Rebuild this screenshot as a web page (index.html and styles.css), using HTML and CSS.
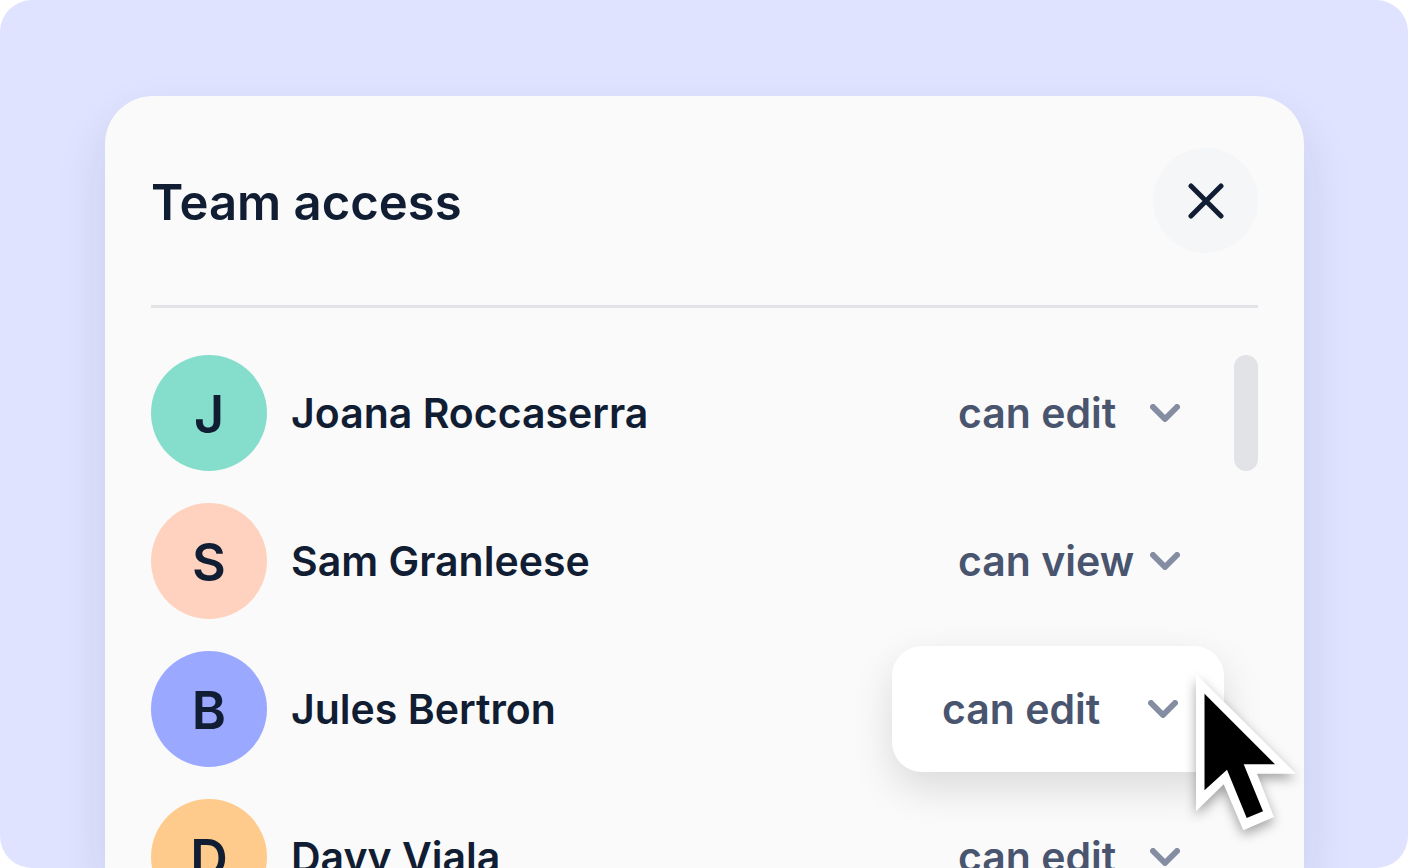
FILE: index.html
```html
<!DOCTYPE html>
<html lang="en">
<head>
<meta charset="utf-8">
<meta name="viewport" content="width=device-width, initial-scale=1">
<title>Team access</title>
<link rel="stylesheet" href="styles.css">
</head>
<body>
<svg class="symbols">
  <symbol id="chevron" viewBox="0 0 30 18"><path d="M3 3 15 15 27 3"/></symbol>
</svg>
<main class="stage">
  <section class="panel" aria-labelledby="panel-title">
    <header class="panel-header">
      <h1 class="panel-title" id="panel-title">Team access</h1>
      <button class="close" type="button" aria-label="Close">
        <svg class="close-icon" viewBox="0 0 36 36"><path d="M3 3 33 33M33 3 3 33"/></svg>
      </button>
    </header>
    <div class="panel-body">
      <ul class="members">
        <li class="member">
          <span class="avatar avatar-mint">J</span>
          <label class="name" for="role-joana">Joana Roccaserra</label>
          <div class="role">
            <select class="role-select" id="role-joana"><option selected>can edit</option><option>can view</option></select>
            <svg class="chevron"><use href="#chevron"/></svg>
          </div>
        </li>
        <li class="member">
          <span class="avatar avatar-peach">S</span>
          <label class="name" for="role-sam">Sam Granleese</label>
          <div class="role">
            <select class="role-select" id="role-sam"><option>can edit</option><option selected>can view</option></select>
            <svg class="chevron"><use href="#chevron"/></svg>
          </div>
        </li>
        <li class="member">
          <span class="avatar avatar-blue">B</span>
          <label class="name" for="role-jules">Jules Bertron</label>
          <div class="role role-active">
            <select class="role-select" id="role-jules"><option selected>can edit</option><option>can view</option></select>
            <svg class="chevron"><use href="#chevron"/></svg>
            <svg class="cursor" viewBox="0 0 100 157">
              <path fill="#fff" d="M0 0 100 99.700H61L78 143 47.300 156.300 27.700 110.300 0 137.300Z"/>
              <path fill="#000" d="M8.500 19.700 79 90.300H47.700L67 137.300 50.700 144 31 95.700 8.500 116.300Z"/>
            </svg>
          </div>
        </li>
        <li class="member">
          <span class="avatar avatar-orange">D</span>
          <label class="name" for="role-davy">Davy Viala</label>
          <div class="role">
            <select class="role-select" id="role-davy"><option selected>can edit</option><option>can view</option></select>
            <svg class="chevron"><use href="#chevron"/></svg>
          </div>
        </li>
      </ul>
      <div class="scroll-thumb"></div>
    </div>
  </section>
</main>
</body>
</html>
```

FILE: styles.css
```css
* {
  box-sizing: border-box;
}

body {
  margin: 0;
  background: #fff;
  color: #101d33;
  font-family: Inter, "Liberation Sans", sans-serif;
  font-weight: 600;
}

.symbols {
  display: none;
}

.stage {
  display: flex;
  height: 100vh;
  padding: 96px 104px 0 105px;
  overflow: hidden;
  border-radius: 32px;
  background: #dfe3ff;
}

.panel {
  flex: 1;
  min-width: 0;
  padding: 0 46px;
  border-radius: 48px 48px 0 0;
  background: #fafafa;
  box-shadow: 0 24px 52px rgba(16, 29, 51, 0.11);
}

.panel-header {
  display: flex;
  align-items: center;
  justify-content: space-between;
  padding: 52px 0;
  border-bottom: 3px solid #e2e3e7;
}

.panel-title {
  margin: 0;
  padding-top: 5px;
  font-size: 49px;
  font-weight: 600;
  line-height: 64px;
}

.close {
  display: grid;
  place-items: center;
  width: 105px;
  height: 105px;
  padding: 0;
  border: 0;
  border-radius: 50%;
  background: #f4f6f8;
}

.close-icon {
  width: 36px;
  height: 36px;
  fill: none;
  stroke: #101d33;
  stroke-width: 5;
  stroke-linecap: round;
}

.panel-body {
  display: flex;
  gap: 10px;
  padding-top: 47px;
}

.members {
  display: flex;
  flex: 1;
  flex-direction: column;
  gap: 32px;
  margin: 0;
  padding: 0;
  list-style: none;
}

.member {
  display: flex;
  align-items: center;
  gap: 24px;
  height: 116px;
}

.avatar {
  display: grid;
  flex: none;
  place-items: center;
  width: 116px;
  height: 116px;
  padding-top: 4px;
  border-radius: 50%;
  font-size: 52px;
  line-height: 64px;
}

.avatar-mint {
  background: #85ddcc;
}

.avatar-peach {
  background: #ffd2bf;
}

.avatar-blue {
  background: #9aa9ff;
}

.avatar-orange {
  background: #ffcb8c;
}

.name {
  flex: 1;
  font-size: 41px;
  line-height: 52px;
}

.role {
  position: relative;
  display: flex;
  flex: none;
  align-items: center;
  width: 266px;
  height: 126px;
  padding-right: 44px;
}

.role-select {
  flex: 1;
  min-width: 0;
  height: 52px;
  padding: 0;
  border: 0;
  appearance: none;
  background: none;
  color: #49546f;
  font: inherit;
  font-size: 41px;
  line-height: 52px;
}

.chevron {
  flex: none;
  width: 30px;
  height: 18px;
  fill: none;
  stroke: #858da3;
  stroke-width: 6;
  stroke-linecap: round;
  stroke-linejoin: round;
}

.role-active {
  width: 332px;
  padding: 0 46px 0 50px;
  border-radius: 30px;
  background: #fff;
  box-shadow: 0 16px 40px rgba(0, 0, 0, 0.13);
}

.cursor {
  position: absolute;
  top: 28px;
  right: -72px;
  width: 100px;
  height: 157px;
  overflow: visible;
  filter: drop-shadow(0 5px 6px rgba(0, 0, 0, 0.35));
}

.scroll-thumb {
  flex: none;
  width: 24px;
  height: 116px;
  border-radius: 12px;
  background: #e2e3e7;
}
```
